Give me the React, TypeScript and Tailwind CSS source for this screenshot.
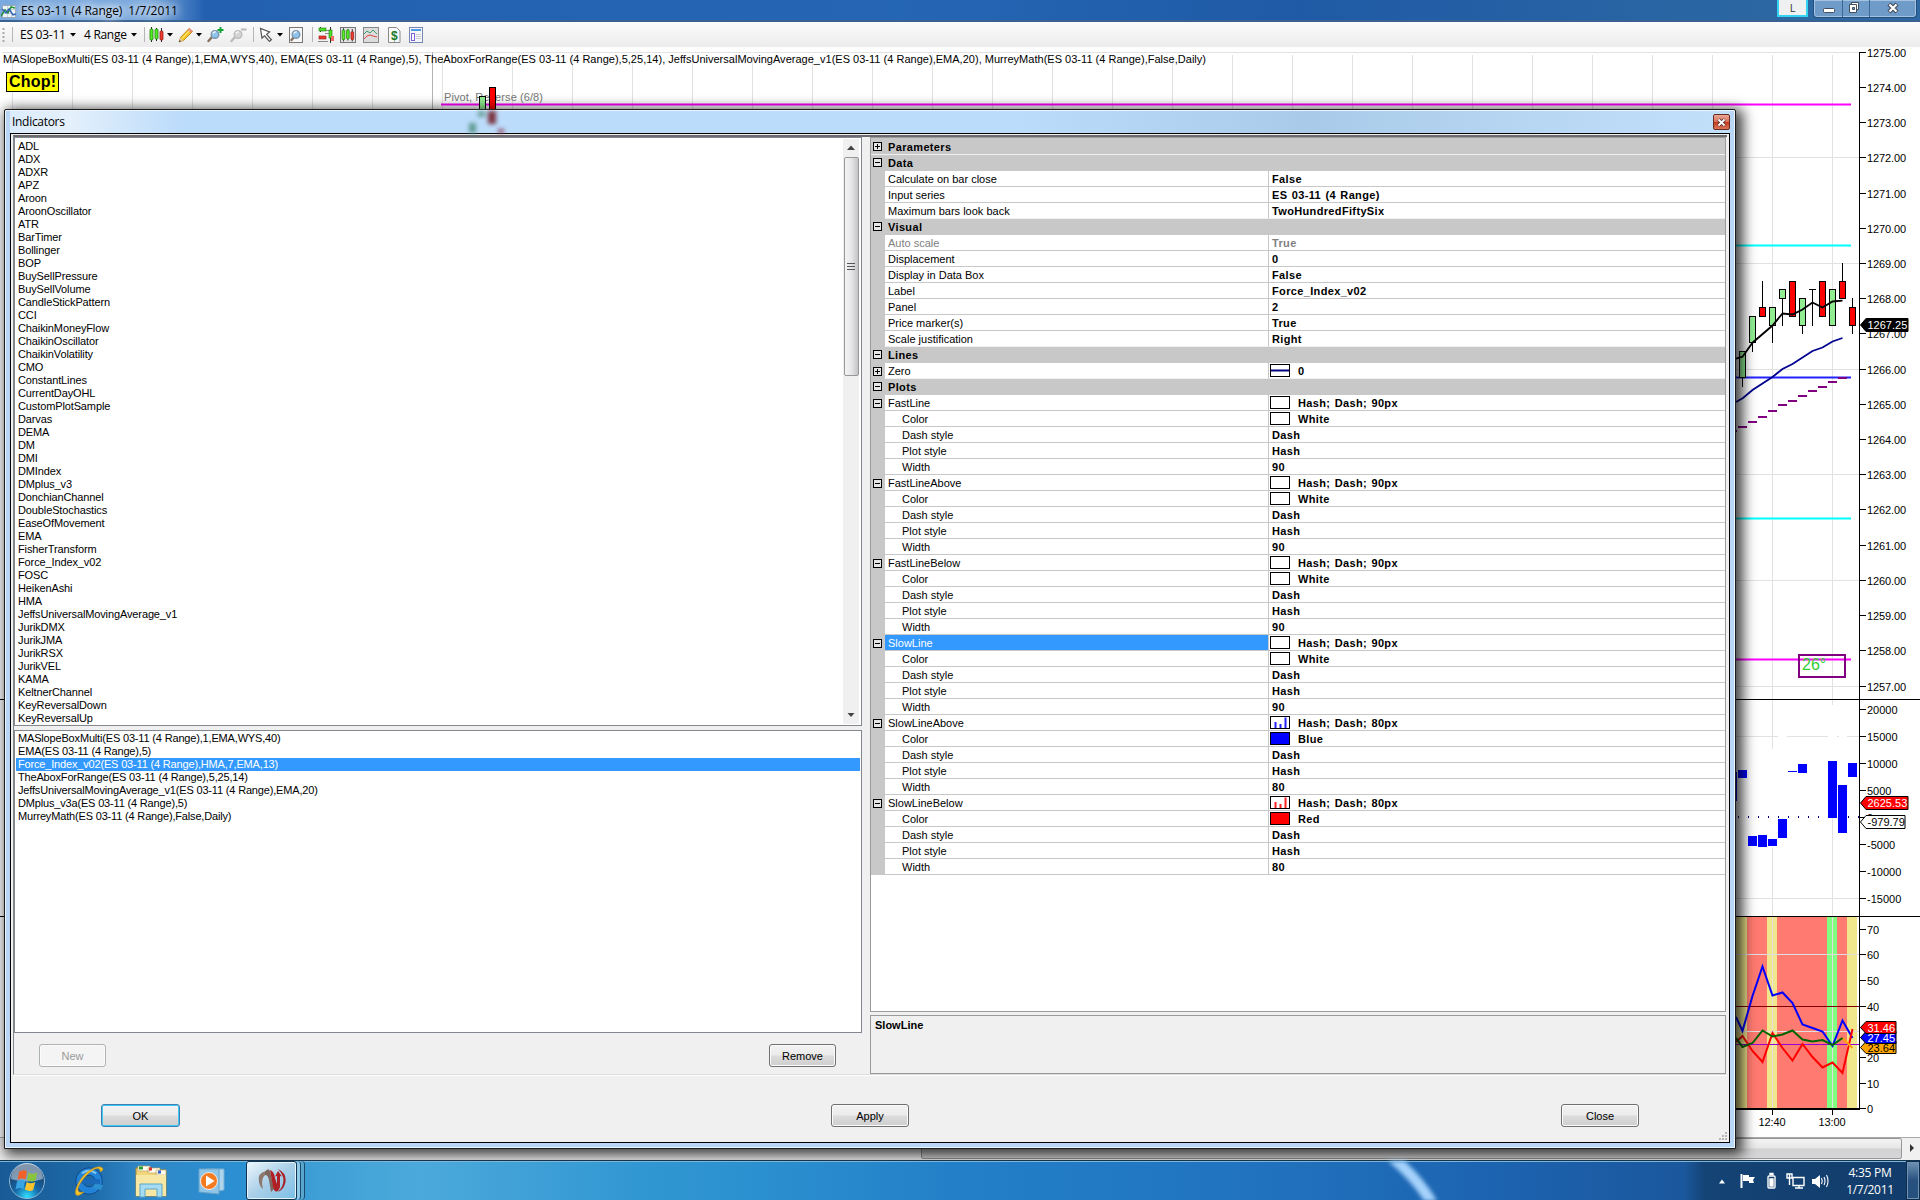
import { clsx } from "clsx";

const indicators = [
  "ADL", "ADX", "ADXR", "APZ", "Aroon", "AroonOscillator", "ATR", "BarTimer", "Bollinger", "BOP",
  "BuySellPressure", "BuySellVolume", "CandleStickPattern", "CCI", "ChaikinMoneyFlow",
  "ChaikinOscillator", "ChaikinVolatility", "CMO", "ConstantLines", "CurrentDayOHL",
  "CustomPlotSample", "Darvas", "DEMA", "DM", "DMI", "DMIndex", "DMplus_v3", "DonchianChannel",
  "DoubleStochastics", "EaseOfMovement", "EMA", "FisherTransform", "Force_Index_v02", "FOSC",
  "HeikenAshi", "HMA", "JeffsUniversalMovingAverage_v1", "JurikDMX", "JurikJMA", "JurikRSX",
  "JurikVEL", "KAMA", "KeltnerChannel", "KeyReversalDown", "KeyReversalUp",
];

const applied = [
  "MASlopeBoxMulti(ES 03-11 (4 Range),1,EMA,WYS,40)",
  "EMA(ES 03-11 (4 Range),5)",
  "Force_Index_v02(ES 03-11 (4 Range),HMA,7,EMA,13)",
  "TheAboxForRange(ES 03-11 (4 Range),5,25,14)",
  "JeffsUniversalMovingAverage_v1(ES 03-11 (4 Range),EMA,20)",
  "DMplus_v3a(ES 03-11 (4 Range),5)",
  "MurreyMath(ES 03-11 (4 Range),False,Daily)",
];

type Row = {
  kind: "header" | "item" | "sub";
  label: string;
  value?: string;
  open?: boolean;
  swatch?: string;
  muted?: boolean;
  selected?: boolean;
};

const header = (label: string, open = true): Row => ({ kind: "header", label, open });
const item = (label: string, value: string): Row => ({ kind: "item", label, value });

function plot(label: string, color: string, width: number, swatch: string): Row[] {
  return [
    { kind: "item", label, value: `Hash; Dash; ${width}px`, open: true, swatch, selected: label === "SlowLine" },
    { kind: "sub", label: "Color", value: color, swatch: color },
    { kind: "sub", label: "Dash style", value: "Dash" },
    { kind: "sub", label: "Plot style", value: "Hash" },
    { kind: "sub", label: "Width", value: String(width) },
  ];
}

const rows: Row[] = [
  header("Parameters", false),
  header("Data"),
  item("Calculate on bar close", "False"),
  item("Input series", "ES 03-11 (4 Range)"),
  item("Maximum bars look back", "TwoHundredFiftySix"),
  header("Visual"),
  { kind: "item", label: "Auto scale", value: "True", muted: true },
  item("Displacement", "0"),
  item("Display in Data Box", "False"),
  item("Label", "Force_Index_v02"),
  item("Panel", "2"),
  item("Price marker(s)", "True"),
  item("Scale justification", "Right"),
  header("Lines"),
  { kind: "item", label: "Zero", value: "0", open: false, swatch: "line" },
  header("Plots"),
  ...plot("FastLine", "White", 90, "White"),
  ...plot("FastLineAbove", "White", 90, "White"),
  ...plot("FastLineBelow", "White", 90, "White"),
  ...plot("SlowLine", "White", 90, "White"),
  ...plot("SlowLineAbove", "Blue", 80, "bars-blue"),
  ...plot("SlowLineBelow", "Red", 80, "bars-red"),
];

function Expander({ open }: { open: boolean }) {
  return (
    <svg width="9" height="9" shapeRendering="crispEdges">
      <rect x="0.5" y="0.5" width="8" height="8" fill="#fff" fillOpacity="0.55" stroke="#000" />
      <path d={open ? "M2 4.5h5" : "M2 4.5h5M4.5 2v5"} stroke="#000" />
    </svg>
  );
}

function Swatch({ kind }: { kind: string }) {
  const fill = kind === "Blue" ? "#00f" : kind === "Red" ? "#f00" : "#fff";
  const bar = kind === "bars-blue" ? "#2222ff" : "#ff2222";
  return (
    <svg width="20" height="13" className="ml-px mr-[8px] shrink-0">
      <rect x="0.5" y="0.5" width="19" height="12" fill={fill} stroke="#000" />
      {kind === "line" && <path d="M1 6.5h18" stroke="#000080" strokeWidth="2" />}
      {kind.startsWith("bars") && (
        <path d="M5.5 12V6M10.5 12V8M15.5 12V1.5" stroke={bar} strokeWidth="2" />
      )}
    </svg>
  );
}

function GridRow({ row, next }: { row: Row; next?: Row }) {
  const line = next?.kind === "header" ? "border-[#f0f0f0]" : "border-[#c8c8c8]";
  if (row.kind === "header") {
    return (
      <div className={clsx("flex h-4 items-center border-b bg-[#c8c8c8] font-bold", line)}>
        <div className="w-4 pl-[2px]"><Expander open={!!row.open} /></div>
        <span className="pl-px pt-px tracking-[0.35px]">{row.label}</span>
      </div>
    );
  }
  return (
    <div className="flex h-4">
      <div className="flex w-[14px] items-center bg-[#c8c8c8] pl-[2px]">
        {row.open !== undefined && <Expander open={row.open} />}
      </div>
      <div
        className={clsx(
          "flex w-[383px] items-center border-b pt-px",
          line,
          row.kind === "sub" ? "pl-[17px]" : "pl-[3px]",
          row.selected && "bg-[#3399ff] text-white",
          row.muted && "text-[#808080]",
        )}
      >
        {row.label}
      </div>
      <div
        className={clsx(
          "flex flex-1 items-center border-b border-l border-l-[#c8c8c8] font-bold tracking-[0.35px] [word-spacing:1px]",
          line,
          !row.swatch && "pl-[3px]",
          row.muted && "text-[#808080]",
        )}
      >
        {row.swatch && <Swatch kind={row.swatch} />}
        <span className="pt-px">{row.value}</span>
      </div>
    </div>
  );
}

function Button({ label, className, disabled }: { label: string; className: string; disabled?: boolean }) {
  return (
    <button
      className={clsx(
        "h-[23px] rounded-[3px] border text-center text-[11px] leading-[20px] shadow-[inset_0_0_0_1px_#fbfbfb]",
        disabled
          ? "border-[#adb2b5] bg-[#f4f4f4] text-[#9a9a9a]"
          : "bg-[linear-gradient(#f3f3f3_0%,#ebebeb_48%,#dcdcdc_52%,#cecece_100%)]",
        className,
      )}
    >
      {label}
    </button>
  );
}

const Caret = ({ className }: { className?: string }) => (
  <svg width="6" height="4" className={className}><path d="M0 0h6L3 3.5z" fill="#000" /></svg>
);

const Sep = ({ className }: { className: string }) => (
  <div className={clsx("h-[15px] w-px bg-[#b5b5b5]", className)} />
);

function Lens({ page, sign, faded }: { page?: boolean; sign?: "plus" | "minus"; faded?: boolean }) {
  return (
    <svg width="17" height="16" viewBox="0 0 17 16">
      {page && <rect x="1.5" y="0.5" width="13" height="15" fill="#f7f7f7" stroke="#777" />}
      <path d={page ? "M6 10L3.500 13" : "M5 10L1.500 14"} stroke={faded ? "#bbb" : "#85705f"} strokeWidth="2.4" strokeLinecap="round" />
      <circle cx="8" cy="7.5" r="3.8" fill={faded ? "#d5d5d5" : "#8fc4ec"} stroke={faded ? "#bbb" : "#7a96ad"} strokeWidth="1.4" />
      <path d="M5.8 6.5a2.6 2.6 0 0 1 3-1.6" stroke="#fff" strokeWidth="1.2" fill="none" />
      {sign === "plus" && <path d="M13.500 0v6M10.500 3h6" stroke="#13a538" strokeWidth="2" />}
      {sign === "minus" && <path d="M11 2.5h5.5" stroke="#b8b8b8" strokeWidth="2" />}
    </svg>
  );
}

const CandleBars = ({ x }: { x: number }) => (
  <g transform={`translate(${x} 0)`}>
    <path d="M2.5 0v15M7.5 1v13M12.5 1v14" stroke="#222" />
    <rect x="1" y="2" width="3" height="11" rx="1" fill="#55ee22" stroke="#1d7d0c" strokeWidth="0.8" />
    <rect x="6" y="2" width="3" height="10" rx="1" fill="#55ee22" stroke="#1d7d0c" strokeWidth="0.8" />
    <rect x="11" y="4" width="3" height="9" rx="1" fill="#f03c30" stroke="#8f1c14" strokeWidth="0.8" />
  </g>
);

function Toolbar() {
  return (
    <div className="flex h-[25px] items-center bg-gradient-to-b from-[#fcfcfc] to-[#ececec] font-['Open_Sans',sans-serif] text-[12px]">
      <svg width="4" height="16" className="ml-[2px]">
        <path d="M1.5 1v14" stroke="#aaa" strokeWidth="2" strokeDasharray="2 2" />
      </svg>
      <Sep className="ml-[6px]" />
      <span className="ml-[7px] w-[50px] whitespace-nowrap tracking-[-0.25px]">ES 03-11</span>
      <Caret className="ml-0" />
      <span className="ml-[8px] w-[45px] whitespace-nowrap tracking-[-0.3px]">4 Range</span>
      <Caret className="ml-[2px]" />
      <Sep className="ml-[7px]" />
      <svg width="16" height="16" className="ml-[4px]"><CandleBars x={0} /></svg>
      <Caret className="ml-[2px]" />
      <svg width="16" height="16" className="ml-[5px]">
        <path d="M1 15l1.5-4.5L11 1.5 14.5 4.5 5.5 13.5z" fill="#f5c520" stroke="#b07b10" strokeWidth="0.8" />
        <path d="M1 15l1.3-4 3 2.4z" fill="#e6c9a0" />
        <path d="M1 15l.7-2 1.4 1.2z" fill="#333" />
        <path d="M9.5 3l3.5 3 1.8-2L11.3 1z" fill="#e98a7a" />
        <path d="M4 11.5l7.5-8" stroke="#fff3a0" />
      </svg>
      <Caret className="ml-[2px]" />
      <div className="ml-[5px]"><Lens sign="plus" /></div>
      <div className="ml-[6px]"><Lens sign="minus" faded /></div>
      <Sep className="ml-[6px]" />
      <svg width="16" height="16" className="ml-[5px]">
        <path d="M1.500 1.500l1.500 9.500 2.600-2.200 4.800 5.700 2-1.700-4.800-5.500 3-2.300z" fill="#fff" stroke="#555" strokeWidth="1.2" />
      </svg>
      <Caret className="ml-[2px]" />
      <div className="ml-[5px]"><Lens page /></div>
      <Sep className="ml-[7px]" />
      <svg width="17" height="16" className="ml-[5px]">
        <path d="M2.5 0v5M12.5 0v16" stroke="#333" />
        <rect x="1" y="1" width="7" height="3" fill="#4dde26" stroke="#1d7d0c" strokeWidth="0.6" />
        <rect x="1" y="9" width="7" height="3" fill="#ee3a30" stroke="#8f1c14" strokeWidth="0.6" />
        <path d="M7 6.500h5M0 14.500h10M8 3.500h4" stroke="#888" />
        <rect x="11" y="3" width="3" height="8" fill="#4dde26" stroke="#1d7d0c" strokeWidth="0.6" />
        <rect x="13" y="9" width="3" height="5" fill="#f06a60" />
      </svg>
      <svg width="16" height="16" className="ml-[5px]">
        <rect x="0.5" y="0.5" width="15" height="15" fill="#e2e2e2" stroke="#777" />
        <g transform="translate(1.3 1.2) scale(.88)"><CandleBars x={0} /></g>
      </svg>
      <svg width="16" height="16" className="ml-[7px]">
        <rect x="0.5" y="0.5" width="15" height="15" fill="#dcdcdc" stroke="#888" />
        <path d="M1 7l3-3 3 2 3-3 4 4" stroke="#3a9d66" fill="none" />
        <path d="M1 12l3-3 3-1 3 1 4 1" stroke="#e04848" fill="none" />
      </svg>
      <svg width="13" height="16" className="ml-[9px]">
        <path d="M0.500 0.500h8l3.500 3.500v11.500H.5z" fill="#fafafa" stroke="#888" />
        <text x="3" y="12.500" fontSize="12" fontWeight="bold" fill="#167a25" fontFamily="Liberation Sans">$</text>
      </svg>
      <svg width="16" height="16" className="ml-[8px]">
        <rect x="0.500" y="0.500" width="13" height="15" fill="#f4f6fb" stroke="#7787b5" />
        <path d="M2 3h10" stroke="#4f9ddf" strokeWidth="2" />
        <rect x="2.500" y="6.500" width="3" height="7" fill="#fff" stroke="#7f62d8" />
        <path d="M7 7.500h5M7 9.500h5M7 11.500h5" stroke="#ccc" />
      </svg>
    </div>
  );
}

function TitleBar() {
  return (
    <div className="flex h-[22px] border-b-2 border-[#3a6290] bg-[linear-gradient(90deg,#79a9de_0px,#79a9de_150px,#2360b0_205px,#2566b4_900px,#1f5aa6_1300px,#2d68a3_1800px,#2d68a3_1920px)]">
      <svg width="16" height="16" className="mt-[4px] ml-[1px]">
        <rect x="1.500" y="1.500" width="13" height="12" fill="#eef3f8" stroke="#9aa9b8" />
        <path d="M2 5.500h12M2 9.500h12M6.500 2v11M10.500 2v11" stroke="#c9d4df" />
        <path d="M0 12l4-6 3 3 3-6 4 1" stroke="#27933a" strokeWidth="1.600" fill="none" />
        <path d="M1 5l4 4 3-4 4 6 3-1" stroke="#2c61b5" strokeWidth="1.400" fill="none" />
      </svg>
      <span className="ml-[4px] leading-[21px] font-['Open_Sans',sans-serif] text-[12px] whitespace-pre tracking-[-0.07px] [text-shadow:0_0_8px_#fff,0_0_10px_#fff,0_0_12px_#fff]">
        {"ES 03-11 (4 Range)  1/7/2011"}
      </span>
      <div className="ml-auto flex items-start">
        <div className="h-[17px] w-[31px] border-2 border-t-0 border-[#35d3f2] bg-[#eef0f2] text-center font-['Open_Sans',sans-serif] text-[11px] leading-[15px] text-[#333]">L</div>
        <div className="mr-[3px] ml-[5px] flex h-[18px] w-[104px] rounded-b-[4px] border border-t-0 border-[#234f80] bg-[#6f9bc8] shadow-[inset_0_0_0_1px_#a5c3e0]">
          <svg width="102" height="17">
            <path d="M28.500 0v17M55.500 0v17" stroke="#3b6797" />
            <rect x="9.500" y="8.500" width="11" height="4" rx="1" fill="#fff" stroke="#444f5c" />
            <path d="M37.500 2.500h7v7h-7z" fill="#fff" stroke="#444f5c" />
            <path d="M35.500 4.500h7v8h-7z" fill="#fff" stroke="#444f5c" />
            <path d="M38.500 7.500h2v2h-2z" fill="#6f9bc8" stroke="#444f5c" />
            <path d="M75 4l8 8M83 4l-8 8" stroke="#444f5c" strokeWidth="4.500" />
            <path d="M75.500 4.500l7 7M82.500 4.500l-7 7" stroke="#fff" strokeWidth="2.200" />
          </svg>
        </div>
      </div>
    </div>
  );
}

// [center x, body top, body bottom, wick top, wick bottom, up]
const candles: [number, number, number, number, number, boolean][] = [
  [1742.5, 351.5, 377.5, 351, 387, true],
  [1752.5, 316.5, 342.5, 316, 352, true],
  [1762.5, 307.5, 316.5, 281, 316, false],
  [1772.5, 307.5, 325.5, 307, 343, true],
  [1782.5, 289.5, 298.5, 289, 326, true],
  [1792.5, 281.5, 316.5, 281, 316, false],
  [1802.5, 298.5, 325.5, 298, 334, true],
  [1822.5, 281.5, 316.5, 281, 316, false],
  [1832.5, 289.5, 325.5, 289, 325, true],
  [1842.5, 281.5, 298.5, 263, 298, false],
  [1852.5, 307.5, 325.5, 298, 334, false],
];

const priceY = [52.5, 87.5, 122.5, 157.5, 193.5, 228.5, 263.5, 298.5, 333.5, 369.5, 404.5, 439.5, 474.5, 509.5, 545.5, 580.5, 615.5, 650.5, 686.5];

const forceLabels: [string, number][] = [
  ["20000", 709.5], ["15000", 736.5], ["10000", 763.5], ["5000", 790.5], ["0", 817.5],
  ["-5000", 844.5], ["-10000", 871.5], ["-15000", 898.5],
];

const dmLabels: [string, number][] = [
  ["70", 929.5], ["60", 954.5], ["50", 980.5], ["40", 1006.5], ["20", 1057.5], ["10", 1083.5], ["0", 1108.5],
];

// x, top, width, height
const forceBars = [
  [1736, 772, 1, 29], [1738, 770, 9, 8], [1748, 836, 9, 10], [1758, 835, 9, 12], [1768, 839, 9, 7],
  [1778, 819, 9, 19], [1788, 771, 9, 1], [1798, 764, 9, 9], [1828, 761, 9, 57], [1838, 785, 9, 48], [1848, 763, 9, 14],
];

const bands: [number, number, string][] = [
  [1736, 11, "#f0e68c"], [1747, 20, "#ff7a70"], [1767, 10, "#f0e68c"], [1777, 50, "#ff7a70"],
  [1827, 10, "#80ff80"], [1837, 10, "#ff7a70"], [1847, 10, "#f0e68c"],
];

const dashes = [[1732, 431], [1742, 427], [1752, 422], [1762, 417], [1772, 411], [1782, 405], [1792, 401], [1802, 396], [1812, 391], [1822, 387], [1832, 382], [1842, 378]];

function Tag({ y, h = 13, w, fill, color, label }: { y: number; h?: number; w: number; fill: string; color: string; label: string }) {
  return (
    <g>
      <path d={`M1860.500 ${y + h / 2}l5.500 -${h / 2}h${w}v${h}h-${w}z`} fill={fill} stroke="#000" />
      <text x="1867.500" y={y + h / 2 + 4} fill={color}>{label}</text>
    </g>
  );
}

function Chart() {
  const gridX = [12, 72, 132, 192, 252, 312, 372, 442];
  for (let x = 512; x < 1840; x += 60) gridX.push(x);
  return (
    <svg width="1920" height="1090" viewBox="0 47 1920 1090" className="block bg-white" fontFamily="Liberation Sans, sans-serif" fontSize="11">
      <path d="M2 52.500h1857" stroke="#e2e2e2" />
      {gridX.map((x) => <path key={x} d={`M${x + 0.5} 55v644`} stroke="#e2e2e2" />)}
      <path d="M432.500 52v100" stroke="#b4b4b4" />
      {[157.5, 263.5, 369.5, 474.5, 580.5, 686.5, 736.5, 898.5].map((y) => <path key={y} d={`M1736 ${y}h123`} stroke="#e2e2e2" />)}
      <path d="M1772.500 699v50M1772.500 847v69M1832.500 699v6M1832.500 818v98" stroke="#e2e2e2" />
      <path d="M1778 736.500h9M1828 736.500h9M1839 736.500h8" stroke="#fff" />

      <text x="3" y="63" textLength="1203" lengthAdjust="spacing">
        MASlopeBoxMulti(ES 03-11 (4 Range),1,EMA,WYS,40), EMA(ES 03-11 (4 Range),5), TheAboxForRange(ES 03-11 (4 Range),5,25,14), JeffsUniversalMovingAverage_v1(ES 03-11 (4 Range),EMA,20), MurreyMath(ES 03-11 (4 Range),False,Daily)
      </text>
      <rect x="6.500" y="72.500" width="52" height="19" fill="#ff0" stroke="#000" />
      <text x="9" y="87" fontSize="16" fontWeight="bold" textLength="47">Chop!</text>
      <path d="M441 104.500h1410" stroke="#f0f" strokeWidth="2" />
      <text x="444" y="101" fill="#777" textLength="99">Pivot, Reverse (6/8)</text>
      <rect x="479.500" y="96.500" width="6" height="20" fill="#90ee90" stroke="#000" />
      <rect x="489.500" y="87.500" width="6" height="30" fill="#f00" stroke="#000" />

      <g fill="none" strokeWidth="2">
        <path d="M1736 245.500h115M1736 518.500h115" stroke="#0ff" />
        <path d="M1736 377.500h115" stroke="#22f" />
        <path d="M1736 659.500h115" stroke="#f0f" />
      </g>
      {candles.map(([x, top, bottom, wt, wb, up]) => (
        <g key={x} stroke="#000">
          <path d={`M${x} ${wt}V${wb}`} />
          <rect x={x - 3} y={top} width="6" height={bottom - top} fill={up ? "#90ee90" : "#f00"} />
        </g>
      ))}
      <path d="M1809 289.500h7M1812.500 289v37" stroke="#000" />
      <g fill="none" strokeWidth="1.800">
        <path d="M1736 358.700L1742.500 356.700 1752.500 342.700 1772.500 325.500 1782.500 313.500 1792.500 314.500 1802.500 309.500 1812.500 302.500 1822.500 307.500 1832.500 301.500 1842.500 300.700" stroke="#000" />
        <path d="M1736 402L1743 398 1752.500 390 1772.500 377 1782.500 369 1792.500 364 1812.500 351 1822.500 347.500 1832.500 341.500 1842.500 338" stroke="#000090" />
      </g>
      {dashes.map(([x, y]) => <path key={x} d={`M${x - 4} ${y}h9`} stroke="#800080" strokeWidth="2" />)}
      <rect x="1799" y="655" width="46" height="22" fill="none" stroke="#800080" strokeWidth="2" />
      <text x="1802" y="670" fontSize="16" fill="#32cd32">26°</text>

      <path d="M1738 817h121" stroke="#000080" strokeWidth="2" strokeDasharray="1 9" />
      {forceBars.map(([x, y, w, h]) => <rect key={x} x={x} y={y} width={w} height={h} fill="#00f" />)}

      {bands.map(([x, w, fill]) => <rect key={x} x={x} y="917" width={w} height="191" fill={fill} />)}
      <path d="M1736 954.500h123M1736 1031.500h123M1772.500 917v191M1832.500 917v191" stroke="#e4dede" />
      <path d="M1736 1006.500h123" stroke="#800000" />
      <path d="M1736 1044.500h123" stroke="#9400d3" />
      <g fill="none" strokeWidth="2">
        <path d="M1736 1017L1742.500 1031 1752.500 996 1762.500 966.500 1772.500 995.500 1782.500 992.500 1792.500 1003 1802.500 1024.500 1812.500 1028 1822.500 1031.500 1832.500 1046 1842.500 1020.500 1852.500 1038" stroke="#00f" />
        <path d="M1736 1042L1742.500 1036 1752.500 1051 1762.500 1062 1772.500 1033 1782.500 1048 1792.500 1060.500 1802.500 1044 1812.500 1057 1822.500 1067.500 1832.500 1062.500 1842.500 1073 1852.500 1029" stroke="#f00" />
        <path d="M1842.500 1038L1852.500 1048" stroke="#ffa500" />
        <path d="M1736 1038L1742.500 1047 1752.500 1043 1762.500 1030.500 1772.500 1036.500 1782.500 1034.500 1792.500 1030.500 1802.500 1039.500 1812.500 1041.500 1822.500 1040 1832.500 1045 1842.500 1038" stroke="#006400" />
      </g>

      <path d="M1859.500 52V1109M0 699.500h1920M0 916.500h1920M1736 1108.500h124M1772.500 1109v6M1832.500 1109v6M1736 1109.500h124" stroke="#000" />
      <g>
        {priceY.map((y, i) => (
          <g key={y}>
            <path d={`M1859 ${y}h7`} stroke="#000" />
            <text x="1867" y={y + 4.5} textLength="39">{(1275 - i).toFixed(2)}</text>
          </g>
        ))}
        {[...forceLabels, ...dmLabels].map(([label, y]) => (
          <g key={y}>
            <path d={`M1859 ${y}h7`} stroke="#000" />
            <text x="1867" y={y + 4.5}>{label}</text>
          </g>
        ))}
      </g>
      <text x="1758.500" y="1126" textLength="27">12:40</text>
      <text x="1818.500" y="1126" textLength="27">13:00</text>

      <Tag y={318.5} w={42} fill="#000" color="#fff" label="1267.25" />
      <Tag y={796.5} w={42} fill="#f00" color="#fff" label="2625.53" />
      <Tag y={815.5} w={39} fill="#fff" color="#000" label="-979.79" />
      <Tag y={1041.5} h={12} w={30} fill="#ffa500" color="#000" label="23.64" />
      <Tag y={1031.5} h={12} w={30} fill="#00f" color="#fff" label="27.45" />
      <Tag y={1021.5} h={12} w={30} fill="#f00" color="#fff" label="31.46" />
    </svg>
  );
}

function ChartScrollbar() {
  return (
    <div className="flex h-[23px] border-t border-[#a8a8a8] bg-[#f0f0f0]">
      <div className="ml-[921px] h-[21px] w-[981px] rounded-[2px] border border-[#979797] bg-[linear-gradient(#f4f4f4_0%,#e6e6e6_48%,#d2d2d4_52%,#d6d6d8_100%)]" />
      <svg width="18" height="21"><path d="M8 6v8l4-4z" fill="#333" /></svg>
    </div>
  );
}

function IndicatorList() {
  return (
    <div className="flex h-[589px] border border-[#828790] bg-white">
      <ul className="flex-1 pt-[2px] pl-[3px] leading-[13px] tracking-[-0.12px]">
        {indicators.map((name) => <li key={name}>{name}</li>)}
      </ul>
      <div className="my-px mr-[2px] flex w-[16px] flex-col items-center bg-[#f0f0f0]">
        <svg width="16" height="18"><path d="M4 11h8L8 6.500z" fill="#444" /></svg>
        <div className="flex h-[219px] w-[15px] items-center justify-center rounded-[2px] border border-[#979797] bg-gradient-to-r from-[#f4f4f4] via-[#e6e6e8] to-[#c4c4c8]">
          <svg width="8" height="8"><path d="M0 .5h8M0 3.500h8M0 6.500h8" stroke="#555" /></svg>
        </div>
        <svg width="16" height="19" className="mt-auto"><path d="M4.500 8h7L8 12z" fill="#444" /></svg>
      </div>
    </div>
  );
}

function AppliedList() {
  return (
    <div className="mt-[4px] h-[303px] border border-[#828790] bg-white p-px">
      <ul className="leading-[13px]">
        {applied.map((name, i) => (
          <li key={name} className={clsx("pl-[2px] tracking-[-0.17px]", i === 2 && "bg-[#3399ff] text-white")}>{name}</li>
        ))}
      </ul>
    </div>
  );
}

function Dialog() {
  return (
    <div className="absolute top-[109px] left-[4px] flex h-[1040px] w-[1732px] flex-col rounded-t-[2px] border border-[#1c1c1c] bg-[#b9d6f6] px-[5px] pb-[5px] text-[11px] shadow-[inset_0_0_0_1px_#eaf5ff,4px_3px_13px_3px_rgba(0,0,0,0.75)]">
      <div className="relative mt-px flex h-[22px] items-center bg-[linear-gradient(90deg,#dcecfc_0px,#e4f0fb_60px,#bcdcfb_170px,#bcdcfb_1000px,#a9cbe9_1300px,#c3e0fb_100%)] font-['Open_Sans',sans-serif] text-[12px]">
        <svg width="60" height="22" className="absolute left-[455px] top-0 blur-[2px]">
          <rect x="13" y="0" width="7" height="6" fill="#6ba39a" />
          <rect x="23" y="0" width="8" height="13" fill="#7b3340" />
          <rect x="4" y="12" width="7" height="10" fill="#5f9b90" />
          <rect x="33" y="18" width="6" height="4" fill="#934a60" />
        </svg>
        <span className="pl-[2px] tracking-[-0.3px]">Indicators</span>
        <div className="ml-auto flex h-[16px] w-[17px] items-center justify-center rounded-[2px] border border-[#6b2a22] bg-[linear-gradient(#eaa796_0%,#d9705c_48%,#c23a20_52%,#d9775c_100%)]">
          <svg width="11" height="9">
            <path d="M2.500 1.500l6 6M8.500 1.500l-6 6" stroke="#533" strokeWidth="3.500" />
            <path d="M2.500 1.500l6 6M8.500 1.500l-6 6" stroke="#fff" strokeWidth="1.800" />
          </svg>
        </div>
      </div>
      <div className="flex min-h-0 flex-1 flex-col border border-black bg-[#f0f0f0]">
        <div className="mx-[2px] mt-px flex h-[940px] border-t-2 border-b border-l border-t-[#6c6c70] border-b-[#dcdcdc] border-l-[#828790] shadow-[0_1px_0_#fff]">
          <div className="flex w-[848px] flex-col">
            <IndicatorList />
            <AppliedList />
            <div className="flex justify-between pt-[11px] pr-[26px] pl-[25px]">
              <Button label="New" disabled className="w-[67px]" />
              <Button label="Remove" className="w-[67px] border-[#707070]" />
            </div>
          </div>
          <div className="ml-[8px] flex w-[856px] flex-col">
            <div className="h-[875px] border border-[#9a9a9a] bg-white">
              <div className="h-px bg-[#c8c8c8]" />
              {rows.map((row, i) => <GridRow key={i} row={row} next={rows[i + 1]} />)}
            </div>
            <div className="mt-[3px] h-[59px] border border-[#9a9a9a] px-[4px] pt-[3px] leading-[13px] font-bold">SlowLine</div>
          </div>
        </div>
        <div className="flex items-start pt-[29px] pl-[90px]">
          <Button label="OK" className="w-[79px] border-[#3c7fb1] shadow-[inset_0_0_0_1px_#40c8f4]!" />
          <Button label="Apply" className="ml-[651px] w-[78px] border-[#707070]" />
          <Button label="Close" className="ml-[652px] w-[78px] border-[#707070]" />
        </div>
        <svg width="12" height="12" className="mt-auto ml-auto">
          <path d="M2 9h2M5 9h2M8 9h2M5 6h2M8 6h2M8 3h2" stroke="#b5b5b5" strokeWidth="2" />
        </svg>
      </div>
    </div>
  );
}

function StartOrb() {
  return (
    <svg width="38" height="38" viewBox="0 0 38 38">
      <defs>
        <radialGradient id="orb" cx="50%" cy="95%" r="80%">
          <stop offset="0" stopColor="#2fe0ff" />
          <stop offset=".45" stopColor="#1668a8" />
          <stop offset="1" stopColor="#1a3f68" />
        </radialGradient>
      </defs>
      <circle cx="19" cy="19" r="17.500" fill="url(#orb)" stroke="#8fb7d4" />
      <path d="M3 17A16 16 0 0 1 35 17Q19 22 3 17z" fill="#fff" fillOpacity=".45" />
      <path d="M11 10q4-3 8-.5l-1.500 8q-4-2-8 .5z" fill="#f0622a" />
      <path d="M20.500 10.500q4 2.500 9 0l-2 8q-4 2-8.500-.5z" fill="#8ac33e" />
      <path d="M9 19.500q4-2.500 8-.5l-1.500 8q-4-2-8 .5z" fill="#38a4e4" />
      <path d="M18.700 20q4 2.500 8.500 0l-2 8q-4 2-8.300-.5z" fill="#fcc52c" />
    </svg>
  );
}

function Taskbar() {
  return (
    <div className="flex h-[40px] items-center border-t border-[#12344e] bg-[linear-gradient(90deg,#185a96_0px,#1d6aa8_90px,#2f86c6_140px,#2b90d2_240px,#3fa0d6_320px,#4ca9db_420px,#3197d2_640px,#2b90cf_760px,#2380c8_950px,#2173bf_1250px,#1c63b0_1500px,#1b579c_1685px,#144375_1705px,#123c6a_100%)] shadow-[inset_0_1px_0_#7fb6d8]">
      <div className="ml-[8px]"><StartOrb /></div>
      <svg width="34" height="38" viewBox="0 0 34 38" className="ml-[26px]">
        <circle cx="17" cy="19" r="9.500" fill="none" stroke="#123f7d" strokeWidth="8" />
        <circle cx="17" cy="19" r="9.500" fill="none" stroke="#2083d8" strokeWidth="6.500" />
        <path d="M10 11.500a10 10 0 0 1 14 0" fill="none" stroke="#7cc5f5" strokeWidth="2" />
        <path d="M9 19.500h19" stroke="#1a68b8" strokeWidth="4.500" />
        <path d="M22 22l9 1-2 5-8-2z" fill="#2b8fd0" />
        <path d="M31 8C31 1 15 6 7 20 0 33 4 37 12 30 2 32 6 23 13 15 20 7 29 3 28 10z" fill="#f5c22c" stroke="#b98a15" strokeWidth=".6" />
      </svg>
      <svg width="34" height="34" viewBox="0 0 34 34" className="ml-[28px]">
        <path d="M2 4h8l2 2h20v26H2z" fill="#f0d77c" stroke="#a98a38" />
        <path d="M4 2h12v5H4zM14 4h12v5H14zM22 6h10v5H22z" fill="#fffdf0" stroke="#b59b52" strokeWidth=".6" />
        <path d="M5 4h4" stroke="#2a9e35" strokeWidth="3" />
        <path d="M15 5h3" stroke="#d33" strokeWidth="3" />
        <path d="M24 8h3" stroke="#36c" strokeWidth="3" />
        <path d="M2 11h30v21H2z" fill="#f7e7a4" />
        <path d="M6 33V20h22v13h-5v-8H11v8z" fill="#a5dcf2" stroke="#5aa6c8" />
      </svg>
      <svg width="28" height="32" viewBox="0 0 28 32" className="ml-[30px]">
        <path d="M8 4h18v21l-18 3z" fill="#aed5ee" stroke="#74aed2" />
        <path d="M1 4h20v25L1 27z" fill="#8fc5e6" stroke="#68a4ca" />
        <circle cx="11" cy="16" r="8.500" fill="#f47a20" stroke="#fff" strokeWidth=".8" />
        <path d="M8 10.500v11l8.500-5.500z" fill="#fff" />
      </svg>
      <div className="ml-[20px] flex h-full">
        <div className="flex w-[51px] items-center justify-center rounded-[3px] border border-[#12344e] bg-gradient-to-br from-[#eef7fc] via-[#a9cfe8] to-[#79bfe6] shadow-[inset_0_0_0_1px_#e5f5ff]">
          <svg width="30" height="28" viewBox="0 0 30 28">
            <path d="M9 4Q0 6 2 15 3 20 6 22 3 12 9 7z" fill="#8d786e" />
            <path d="M8 5Q11 0 13 4L17 22 14 25 12 13Q11 8 8 8z" fill="#7d675e" />
            <path d="M13 3Q17 4 18 11l2 6V9l-2 .5L21 4l4 5.500-2-.5v11Q21 26 18 24 16 22 15 14z" fill="#b01f24" />
            <path d="M21 2Q31 7 28 17 26 23 21 25 28 18 26 10 24 5 21 2z" fill="#a81f26" />
          </svg>
        </div>
        <div className="w-[4px] rounded-r border-r border-[#174a6c] bg-[#8fc9e8]" />
        <div className="w-[4px] rounded-r border-r border-[#174a6c] bg-[#5ba6cf]" />
      </div>
      <svg width="110" height="40" className="ml-[1065px] blur-[2px]">
        <path d="M22 -4Q48 18 62 42" stroke="#a5d2fb" strokeWidth="11" fill="none" />
      </svg>
      <svg width="112" height="24" viewBox="0 0 112 24" className="ml-auto text-white" fill="none" stroke="#fff" strokeWidth="1.400">
        <path d="M0 14.500h6l-3-4z" fill="#fff" stroke="none" />
        <path d="M22.500 5v14" strokeWidth="2" />
        <path d="M24 6h6v2h6l-2 3 1 3h-5v-2h-6z" fill="#fff" stroke="none" />
        <rect x="49" y="7" width="7" height="12" rx="1" />
        <path d="M51 10h3v7h-3zM51 4.500h3v1h-3z" fill="#fff" />
        <path d="M74 8.500h11v8H74zM76 19h8M80 16v3M70.500 5v11M68 5h5v4h-5z" />
        <path d="M93 10h3l5-4v13l-5-4h-3z" fill="#fff" stroke="none" />
        <path d="M102.500 9q1.500 3 0 6M105 8q2 4 0 8M107.500 6q3 6 0 12" strokeWidth="1.100" />
      </svg>
      <div className="ml-[14px] w-[50px] text-center font-['Open_Sans',sans-serif] text-[12px] leading-[17px] whitespace-nowrap text-white">
        <div className="tracking-[-0.25px]">4:35 PM</div>
        <div className="tracking-[-0.3px]">1/7/2011</div>
      </div>
      <div className="ml-[11px] h-full w-[14px] border border-[#0d2c4b] bg-gradient-to-b from-[#7093b3] via-[#28517f] to-[#25507e] shadow-[inset_0_0_0_1px_#6f93b4]" />
    </div>
  );
}

export default function App() {
  return (
    <div className="relative flex h-[1200px] w-[1920px] flex-col overflow-hidden bg-white font-['Liberation_Sans',sans-serif] text-black">
      <TitleBar />
      <Toolbar />
      <Chart />
      <ChartScrollbar />
      <Dialog />
      <div className="relative"><Taskbar /></div>
    </div>
  );
}
